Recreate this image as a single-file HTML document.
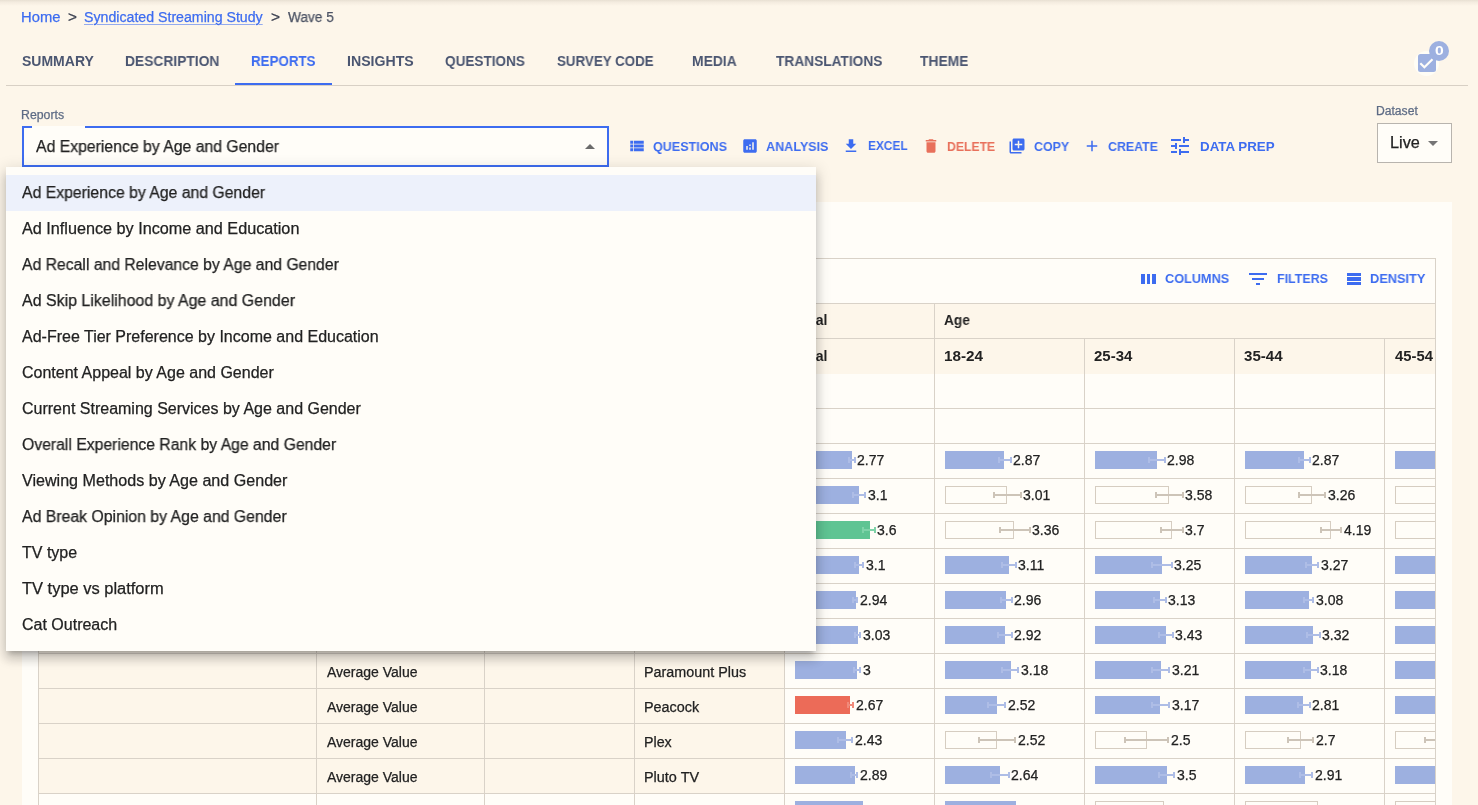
<!DOCTYPE html>
<html><head><meta charset="utf-8"><style>
html,body{margin:0;padding:0}
body{width:1478px;height:805px;overflow:hidden;position:relative;background:#fdf6ea;font-family:"Liberation Sans",sans-serif}
</style></head><body>
<div style="position:absolute;left:0;top:0;width:1478px;height:6px;background:linear-gradient(rgba(60,40,20,.11),rgba(60,40,20,.05) 35%,rgba(60,40,20,0))"></div>
<div style="position:absolute;left:6px;top:85px;width:1462px;height:1px;background:#d8d0c5;"></div>
<div style="position:absolute;left:235px;top:83px;width:97px;height:2px;background:#3d6cf0;"></div>
<div style="position:absolute;left:1414px;top:51px;width:25px;height:25px;border-radius:50%;background:#fffdf6"></div>
<svg style="position:absolute;left:1418px;top:54px" width="18" height="18" viewBox="0 0 18 18"><rect x="0" y="0" width="18" height="18" rx="2.5" fill="#9db0e0"/><path d="M2.3 9.2 L6.4 13.3 L14.5 5.2" stroke="#fffdf8" stroke-width="2.2" fill="none"/></svg>
<div style="position:absolute;left:1429px;top:41px;width:20px;height:20px;border-radius:50%;background:#9db0e0"></div>
<div style="position:absolute;left:22px;top:126px;width:583px;height:37px;border:2px solid #3d6cf0;background:#fffdf8"></div>
<div style="position:absolute;left:32px;top:126px;width:53px;height:2px;background:#fffdf8;"></div>
<svg style="position:absolute;left:585px;top:144px" width="10" height="5" viewBox="0 0 10 5"><path d="M0 5 L5 0 L10 5Z" fill="#6b6b6b"/></svg>
<svg style="position:absolute;left:627.75px;top:137.2px" width="18" height="18" viewBox="0 0 24 24"><path d="M3 14h4v-4H3v4zm0 5h4v-4H3v4zM3 9h4V5H3v4zm5 5h13v-4H8v4zm0 5h13v-4H8v4zM8 5v4h13V5H8z" fill="#3d6cf0"/></svg>
<svg style="position:absolute;left:740.9px;top:136.7px" width="18" height="18" viewBox="0 0 24 24"><path d="M19 3H5c-1.1 0-2 .9-2 2v14c0 1.1.9 2 2 2h14c1.1 0 2-.9 2-2V5c0-1.1-.9-2-2-2zM9 17H7v-5h2v5zm4 0h-2v-3h2v3zm0-5h-2v-2h2v2zm4 5h-2V7h2v10z" fill="#3d6cf0"/></svg>
<svg style="position:absolute;left:842px;top:136.5px" width="18" height="18" viewBox="0 0 24 24"><path d="M19 9h-4V3H9v6H5l7 7 7-7zM5 18v2h14v-2H5z" fill="#3d6cf0"/></svg>
<svg style="position:absolute;left:921.5px;top:137px" width="18" height="18" viewBox="0 0 24 24"><path d="M6 19c0 1.1.9 2 2 2h8c1.1 0 2-.9 2-2V7H6v12zM19 4h-3.5l-1-1h-5l-1 1H5v2h14V4z" fill="#e8705b"/></svg>
<svg style="position:absolute;left:1007.8px;top:136.8px" width="18" height="18" viewBox="0 0 24 24"><path d="M4 6H2v14c0 1.1.9 2 2 2h14v-2H4V6zm16-4H8c-1.1 0-2 .9-2 2v12c0 1.1.9 2 2 2h12c1.1 0 2-.9 2-2V4c0-1.1-.9-2-2-2zm-1 9h-4v4h-2v-4H9V9h4V5h2v4h4v2z" fill="#3d6cf0"/></svg>
<svg style="position:absolute;left:1082.6px;top:136.9px" width="18" height="18" viewBox="0 0 24 24"><path d="M19 13h-6v6h-2v-6H5v-2h6V5h2v6h6v2z" fill="#3d6cf0"/></svg>
<svg style="position:absolute;left:1168.2px;top:134px" width="24" height="24" viewBox="0 0 24 24"><path d="M3 17v2h6v-2H3zM3 5v2h10V5H3zm10 16v-2h8v-2h-8v-2h-2v6h2zM7 9v2H3v2h4v2h2V9H7zm14 4v-2H11v2h10zm-6-4h2V7h4V5h-4V3h-2v6z" fill="#3d6cf0"/></svg>
<div style="position:absolute;left:1377px;top:123px;width:73px;height:38px;border:1px solid #b8b4ae;background:#fffdf8"></div>
<svg style="position:absolute;left:1428px;top:141px" width="10" height="5" viewBox="0 0 10 5"><path d="M0 0 L5 5 L10 0Z" fill="#757575"/></svg>
<div style="position:absolute;left:22px;top:202px;width:1430px;height:620px;background:#fffdf8;"></div>
<div style="position:absolute;left:38px;top:258px;width:1396px;height:600px;border:1px solid #d9d2c8;border-bottom:none"></div>
<div style="position:absolute;left:1141.4px;top:273.7px;width:3.599999999999909px;height:10.300000000000011px;background:#3d6cf0;"></div>
<div style="position:absolute;left:1146.7px;top:273.7px;width:3.7999999999999545px;height:10.300000000000011px;background:#3d6cf0;"></div>
<div style="position:absolute;left:1152.2px;top:273.7px;width:3.7999999999999545px;height:10.300000000000011px;background:#3d6cf0;"></div>
<div style="position:absolute;left:1249px;top:273.1px;width:18px;height:1.8px;background:#3d6cf0;"></div>
<div style="position:absolute;left:1252px;top:278px;width:12px;height:1.8px;background:#3d6cf0;"></div>
<div style="position:absolute;left:1256px;top:283px;width:4px;height:1.8px;background:#3d6cf0;"></div>
<div style="position:absolute;left:1347px;top:273px;width:13.9px;height:2.8px;background:#3d6cf0;"></div>
<div style="position:absolute;left:1347px;top:277.4px;width:13.9px;height:3.2px;background:#3d6cf0;"></div>
<div style="position:absolute;left:1347px;top:282.1px;width:13.9px;height:2.7px;background:#3d6cf0;"></div>
<div style="position:absolute;left:39px;top:303px;width:1396px;height:1px;background:#d9d2c8;"></div>
<div style="position:absolute;left:39px;top:304px;width:1396px;height:70px;background:#fdf6ea;"></div>
<div style="position:absolute;left:39px;top:338px;width:1396px;height:1px;background:#d9d2c8;"></div>
<div style="position:absolute;left:39px;top:373px;width:745px;height:35px;background:#fdf6ea;"></div>
<div style="position:absolute;left:39px;top:408px;width:745px;height:35px;background:#fdf6ea;"></div>
<div style="position:absolute;left:39px;top:443px;width:745px;height:35px;background:#fdf6ea;"></div>
<div style="position:absolute;left:39px;top:478px;width:745px;height:35px;background:#fdf6ea;"></div>
<div style="position:absolute;left:39px;top:513px;width:745px;height:35px;background:#fdf6ea;"></div>
<div style="position:absolute;left:39px;top:548px;width:745px;height:35px;background:#fdf6ea;"></div>
<div style="position:absolute;left:39px;top:583px;width:745px;height:35px;background:#fdf6ea;"></div>
<div style="position:absolute;left:39px;top:618px;width:745px;height:35px;background:#fdf6ea;"></div>
<div style="position:absolute;left:39px;top:653px;width:745px;height:35px;background:#fdf6ea;"></div>
<div style="position:absolute;left:39px;top:688px;width:745px;height:35px;background:#fdf6ea;"></div>
<div style="position:absolute;left:39px;top:723px;width:745px;height:35px;background:#fdf6ea;"></div>
<div style="position:absolute;left:39px;top:758px;width:745px;height:35px;background:#fdf6ea;"></div>
<div style="position:absolute;left:39px;top:408px;width:1396px;height:1px;background:#d9d2c8;"></div>
<div style="position:absolute;left:39px;top:443px;width:1396px;height:1px;background:#d9d2c8;"></div>
<div style="position:absolute;left:39px;top:478px;width:1396px;height:1px;background:#d9d2c8;"></div>
<div style="position:absolute;left:39px;top:513px;width:1396px;height:1px;background:#d9d2c8;"></div>
<div style="position:absolute;left:39px;top:548px;width:1396px;height:1px;background:#d9d2c8;"></div>
<div style="position:absolute;left:39px;top:583px;width:1396px;height:1px;background:#d9d2c8;"></div>
<div style="position:absolute;left:39px;top:618px;width:1396px;height:1px;background:#d9d2c8;"></div>
<div style="position:absolute;left:39px;top:653px;width:1396px;height:1px;background:#d9d2c8;"></div>
<div style="position:absolute;left:39px;top:688px;width:1396px;height:1px;background:#d9d2c8;"></div>
<div style="position:absolute;left:39px;top:723px;width:1396px;height:1px;background:#d9d2c8;"></div>
<div style="position:absolute;left:39px;top:758px;width:1396px;height:1px;background:#d9d2c8;"></div>
<div style="position:absolute;left:39px;top:793px;width:1396px;height:1px;background:#d9d2c8;"></div>
<div style="position:absolute;left:316px;top:303px;width:1px;height:600px;background:#d9d2c8;"></div>
<div style="position:absolute;left:484px;top:303px;width:1px;height:600px;background:#d9d2c8;"></div>
<div style="position:absolute;left:634px;top:303px;width:1px;height:600px;background:#d9d2c8;"></div>
<div style="position:absolute;left:784px;top:303px;width:1px;height:600px;background:#d9d2c8;"></div>
<div style="position:absolute;left:934px;top:303px;width:1px;height:600px;background:#d9d2c8;"></div>
<div style="position:absolute;left:1084px;top:338px;width:1px;height:600px;background:#d9d2c8;"></div>
<div style="position:absolute;left:1234px;top:338px;width:1px;height:600px;background:#d9d2c8;"></div>
<div style="position:absolute;left:1384px;top:338px;width:1px;height:600px;background:#d9d2c8;"></div>
<div style="position:absolute;left:21.36px;top:10px;font-size:14px;line-height:14px;font-weight:400;color:#3d6cf0;white-space:nowrap;will-change:transform;-webkit-text-stroke:0.25px #3d6cf0;transform:scaleX(1.0553);transform-origin:0 0;">Home</div>
<div style="position:absolute;left:67.93px;top:10px;font-size:14px;line-height:14px;font-weight:400;color:#3c4150;white-space:nowrap;will-change:transform;-webkit-text-stroke:0.25px #3c4150;transform:scaleX(1.0867);transform-origin:0 0;">&gt;</div>
<div style="position:absolute;left:84.12px;top:10px;font-size:14px;line-height:14px;font-weight:400;color:#3d6cf0;white-space:nowrap;will-change:transform;-webkit-text-stroke:0.25px #3d6cf0;transform:scaleX(1.0116);transform-origin:0 0;text-decoration:underline;text-decoration-color:rgba(61,108,240,.55);text-underline-offset:1.5px;text-decoration-thickness:1px">Syndicated Streaming Study</div>
<div style="position:absolute;left:270.82px;top:10px;font-size:14px;line-height:14px;font-weight:400;color:#3c4150;white-space:nowrap;will-change:transform;-webkit-text-stroke:0.25px #3c4150;transform:scaleX(1.1016);transform-origin:0 0;">&gt;</div>
<div style="position:absolute;left:287.78px;top:10px;font-size:14px;line-height:14px;font-weight:400;color:#4b5263;white-space:nowrap;will-change:transform;-webkit-text-stroke:0.25px #4b5263;transform:scaleX(0.9744);transform-origin:0 0;">Wave 5</div>
<div style="position:absolute;left:21.55px;top:54px;font-size:14px;line-height:14px;font-weight:700;color:#4b5671;white-space:nowrap;will-change:transform;">SUMMARY</div>
<div style="position:absolute;left:125.08px;top:54px;font-size:14px;line-height:14px;font-weight:700;color:#4b5671;white-space:nowrap;will-change:transform;transform:scaleX(0.9859);transform-origin:0 0;">DESCRIPTION</div>
<div style="position:absolute;left:250.71px;top:54px;font-size:14px;line-height:14px;font-weight:700;color:#3d6cf0;white-space:nowrap;will-change:transform;transform:scaleX(0.9535);transform-origin:0 0;">REPORTS</div>
<div style="position:absolute;left:346.85px;top:54px;font-size:14px;line-height:14px;font-weight:700;color:#4b5671;white-space:nowrap;will-change:transform;transform:scaleX(1.0090);transform-origin:0 0;">INSIGHTS</div>
<div style="position:absolute;left:445.37px;top:54px;font-size:14px;line-height:14px;font-weight:700;color:#4b5671;white-space:nowrap;will-change:transform;transform:scaleX(0.9698);transform-origin:0 0;">QUESTIONS</div>
<div style="position:absolute;left:557.18px;top:54px;font-size:14px;line-height:14px;font-weight:700;color:#4b5671;white-space:nowrap;will-change:transform;transform:scaleX(0.9528);transform-origin:0 0;">SURVEY CODE</div>
<div style="position:absolute;left:691.67px;top:54px;font-size:14px;line-height:14px;font-weight:700;color:#4b5671;white-space:nowrap;will-change:transform;transform:scaleX(0.9906);transform-origin:0 0;">MEDIA</div>
<div style="position:absolute;left:776.23px;top:54px;font-size:14px;line-height:14px;font-weight:700;color:#4b5671;white-space:nowrap;will-change:transform;transform:scaleX(0.9793);transform-origin:0 0;">TRANSLATIONS</div>
<div style="position:absolute;left:919.93px;top:54px;font-size:14px;line-height:14px;font-weight:700;color:#4b5671;white-space:nowrap;will-change:transform;transform:scaleX(0.9863);transform-origin:0 0;">THEME</div>
<div style="position:absolute;left:1434.65px;top:45px;font-size:12px;line-height:12px;font-weight:700;color:#ffffff;white-space:nowrap;will-change:transform;transform:scaleX(1.3068);transform-origin:0 0;">0</div>
<div style="position:absolute;left:20.69px;top:109px;font-size:12px;line-height:12px;font-weight:400;color:#5d6b85;white-space:nowrap;will-change:transform;-webkit-text-stroke:0.25px #5d6b85;transform:scaleX(1.0249);transform-origin:0 0;">Reports</div>
<div style="position:absolute;left:36.26px;top:139px;font-size:16px;line-height:16px;font-weight:400;color:#222222;white-space:nowrap;will-change:transform;-webkit-text-stroke:0.25px #222222;transform:scaleX(0.9861);transform-origin:0 0;">Ad Experience by Age and Gender</div>
<div style="position:absolute;left:653.23px;top:140px;font-size:13px;line-height:13px;font-weight:700;color:#3d6cf0;white-space:nowrap;will-change:transform;transform:scaleX(0.9656);transform-origin:0 0;">QUESTIONS</div>
<div style="position:absolute;left:766.49px;top:140px;font-size:13px;line-height:13px;font-weight:700;color:#3d6cf0;white-space:nowrap;will-change:transform;transform:scaleX(0.9685);transform-origin:0 0;">ANALYSIS</div>
<div style="position:absolute;left:868.10px;top:139px;font-size:13px;line-height:13px;font-weight:700;color:#3d6cf0;white-space:nowrap;will-change:transform;transform:scaleX(0.9129);transform-origin:0 0;">EXCEL</div>
<div style="position:absolute;left:947.18px;top:140px;font-size:13px;line-height:13px;font-weight:700;color:#e8705b;white-space:nowrap;will-change:transform;transform:scaleX(0.9384);transform-origin:0 0;">DELETE</div>
<div style="position:absolute;left:1034.25px;top:140px;font-size:13px;line-height:13px;font-weight:700;color:#3d6cf0;white-space:nowrap;will-change:transform;transform:scaleX(0.9518);transform-origin:0 0;">COPY</div>
<div style="position:absolute;left:1108.45px;top:140px;font-size:13px;line-height:13px;font-weight:700;color:#3d6cf0;white-space:nowrap;will-change:transform;transform:scaleX(0.9511);transform-origin:0 0;">CREATE</div>
<div style="position:absolute;left:1199.80px;top:140px;font-size:13px;line-height:13px;font-weight:700;color:#3d6cf0;white-space:nowrap;will-change:transform;transform:scaleX(1.0266);transform-origin:0 0;">DATA PREP</div>
<div style="position:absolute;left:1376.41px;top:105px;font-size:12px;line-height:12px;font-weight:400;color:#5d6b85;white-space:nowrap;will-change:transform;-webkit-text-stroke:0.25px #5d6b85;transform:scaleX(1.0098);transform-origin:0 0;">Dataset</div>
<div style="position:absolute;left:1390.25px;top:135px;font-size:16px;line-height:16px;font-weight:400;color:#222222;white-space:nowrap;will-change:transform;-webkit-text-stroke:0.25px #222222;transform:scaleX(1.0152);transform-origin:0 0;">Live</div>
<div style="position:absolute;left:1165.43px;top:272px;font-size:13px;line-height:13px;font-weight:700;color:#3d6cf0;white-space:nowrap;will-change:transform;transform:scaleX(0.9767);transform-origin:0 0;">COLUMNS</div>
<div style="position:absolute;left:1277.16px;top:272px;font-size:13px;line-height:13px;font-weight:700;color:#3d6cf0;white-space:nowrap;will-change:transform;transform:scaleX(0.9575);transform-origin:0 0;">FILTERS</div>
<div style="position:absolute;left:1369.74px;top:272px;font-size:13px;line-height:13px;font-weight:700;color:#3d6cf0;white-space:nowrap;will-change:transform;transform:scaleX(0.9826);transform-origin:0 0;">DENSITY</div>
<div style="position:absolute;left:794.82px;top:313px;font-size:14px;line-height:14px;font-weight:700;color:#222222;white-space:nowrap;will-change:transform;">Total</div>
<div style="position:absolute;left:794.82px;top:349px;font-size:14px;line-height:14px;font-weight:700;color:#222222;white-space:nowrap;will-change:transform;">Total</div>
<div style="position:absolute;left:944.48px;top:313px;font-size:14px;line-height:14px;font-weight:700;color:#222222;white-space:nowrap;will-change:transform;transform:scaleX(0.9771);transform-origin:0 0;">Age</div>
<div style="position:absolute;left:944.05px;top:349px;font-size:14px;line-height:14px;font-weight:700;color:#222222;white-space:nowrap;will-change:transform;transform:scaleX(1.0911);transform-origin:0 0;">18-24</div>
<div style="position:absolute;left:1094.47px;top:349px;font-size:14px;line-height:14px;font-weight:700;color:#222222;white-space:nowrap;will-change:transform;transform:scaleX(1.0708);transform-origin:0 0;">25-34</div>
<div style="position:absolute;left:1244.40px;top:349px;font-size:14px;line-height:14px;font-weight:700;color:#222222;white-space:nowrap;will-change:transform;transform:scaleX(1.0785);transform-origin:0 0;">35-44</div>
<div style="position:absolute;left:1394.75px;top:349px;font-size:14px;line-height:14px;font-weight:700;color:#222222;white-space:nowrap;will-change:transform;transform:scaleX(1.0574);transform-origin:0 0;">45-54</div>
<div style="position:absolute;left:327.15px;top:665px;font-size:14px;line-height:14px;font-weight:400;color:#222222;white-space:nowrap;will-change:transform;-webkit-text-stroke:0.25px #222222;">Average Value</div>
<div style="position:absolute;left:644.19px;top:665px;font-size:14px;line-height:14px;font-weight:400;color:#222222;white-space:nowrap;will-change:transform;-webkit-text-stroke:0.25px #222222;transform:scaleX(1.0249);transform-origin:0 0;">Paramount Plus</div>
<div style="position:absolute;left:327.15px;top:700px;font-size:14px;line-height:14px;font-weight:400;color:#222222;white-space:nowrap;will-change:transform;-webkit-text-stroke:0.25px #222222;">Average Value</div>
<div style="position:absolute;left:644.19px;top:700px;font-size:14px;line-height:14px;font-weight:400;color:#222222;white-space:nowrap;will-change:transform;-webkit-text-stroke:0.25px #222222;transform:scaleX(1.0281);transform-origin:0 0;">Peacock</div>
<div style="position:absolute;left:327.15px;top:735px;font-size:14px;line-height:14px;font-weight:400;color:#222222;white-space:nowrap;will-change:transform;-webkit-text-stroke:0.25px #222222;">Average Value</div>
<div style="position:absolute;left:644.20px;top:735px;font-size:14px;line-height:14px;font-weight:400;color:#222222;white-space:nowrap;will-change:transform;-webkit-text-stroke:0.25px #222222;transform:scaleX(1.0183);transform-origin:0 0;">Plex</div>
<div style="position:absolute;left:327.15px;top:770px;font-size:14px;line-height:14px;font-weight:400;color:#222222;white-space:nowrap;will-change:transform;-webkit-text-stroke:0.25px #222222;">Average Value</div>
<div style="position:absolute;left:644.19px;top:770px;font-size:14px;line-height:14px;font-weight:400;color:#222222;white-space:nowrap;will-change:transform;-webkit-text-stroke:0.25px #222222;transform:scaleX(1.0304);transform-origin:0 0;">Pluto TV</div>
<div style="position:absolute;left:0;top:0;width:1435px;height:805px;overflow:hidden"><div style="position:absolute;left:795px;top:451px;width:57px;height:18px;background:#9db0e0;"></div>
<div style="position:absolute;left:848.3px;top:459px;width:7.2000000000000455px;height:1.7px;background:#aebde6;"></div>
<div style="position:absolute;left:848.3px;top:457px;width:2px;height:6px;background:#aebde6;"></div>
<div style="position:absolute;left:853.5px;top:457px;width:2px;height:6px;background:#aebde6;"></div>
<div style="position:absolute;left:795px;top:486px;width:64px;height:18px;background:#9db0e0;"></div>
<div style="position:absolute;left:852.4px;top:494px;width:13.399999999999977px;height:1.7px;background:#aebde6;"></div>
<div style="position:absolute;left:852.4px;top:492px;width:2px;height:6px;background:#aebde6;"></div>
<div style="position:absolute;left:863.8px;top:492px;width:2px;height:6px;background:#aebde6;"></div>
<div style="position:absolute;left:795px;top:521px;width:74.79999999999995px;height:18px;background:#5fc493;"></div>
<div style="position:absolute;left:862px;top:529px;width:13.600000000000023px;height:1.7px;background:#7fd3a9;"></div>
<div style="position:absolute;left:862px;top:527px;width:2px;height:6px;background:#7fd3a9;"></div>
<div style="position:absolute;left:873.6px;top:527px;width:2px;height:6px;background:#7fd3a9;"></div>
<div style="position:absolute;left:795px;top:556px;width:63.89999999999998px;height:18px;background:#9db0e0;"></div>
<div style="position:absolute;left:854px;top:564px;width:10px;height:1.7px;background:#aebde6;"></div>
<div style="position:absolute;left:854px;top:562px;width:2px;height:6px;background:#aebde6;"></div>
<div style="position:absolute;left:862px;top:562px;width:2px;height:6px;background:#aebde6;"></div>
<div style="position:absolute;left:795px;top:591px;width:60.60000000000002px;height:18px;background:#9db0e0;"></div>
<div style="position:absolute;left:851.8px;top:599px;width:6.2000000000000455px;height:1.7px;background:#aebde6;"></div>
<div style="position:absolute;left:851.8px;top:597px;width:2px;height:6px;background:#aebde6;"></div>
<div style="position:absolute;left:856px;top:597px;width:2px;height:6px;background:#aebde6;"></div>
<div style="position:absolute;left:795px;top:626px;width:62.799999999999955px;height:18px;background:#9db0e0;"></div>
<div style="position:absolute;left:854.1px;top:634px;width:7.199999999999932px;height:1.7px;background:#aebde6;"></div>
<div style="position:absolute;left:854.1px;top:632px;width:2px;height:6px;background:#aebde6;"></div>
<div style="position:absolute;left:859.3px;top:632px;width:2px;height:6px;background:#aebde6;"></div>
<div style="position:absolute;left:795px;top:661px;width:61.89999999999998px;height:18px;background:#9db0e0;"></div>
<div style="position:absolute;left:852.5px;top:669px;width:8.799999999999955px;height:1.7px;background:#aebde6;"></div>
<div style="position:absolute;left:852.5px;top:667px;width:2px;height:6px;background:#aebde6;"></div>
<div style="position:absolute;left:859.3px;top:667px;width:2px;height:6px;background:#aebde6;"></div>
<div style="position:absolute;left:795px;top:696px;width:54.89999999999998px;height:18px;background:#ec6b58;"></div>
<div style="position:absolute;left:846.7px;top:704px;width:7.699999999999932px;height:1.7px;background:#f08a7a;"></div>
<div style="position:absolute;left:846.7px;top:702px;width:2px;height:6px;background:#f08a7a;"></div>
<div style="position:absolute;left:852.4px;top:702px;width:2px;height:6px;background:#f08a7a;"></div>
<div style="position:absolute;left:795px;top:731px;width:51px;height:18px;background:#9db0e0;"></div>
<div style="position:absolute;left:836.9px;top:739px;width:16.300000000000068px;height:1.7px;background:#aebde6;"></div>
<div style="position:absolute;left:836.9px;top:737px;width:2px;height:6px;background:#aebde6;"></div>
<div style="position:absolute;left:851.2px;top:737px;width:2px;height:6px;background:#aebde6;"></div>
<div style="position:absolute;left:795px;top:766px;width:59.799999999999955px;height:18px;background:#9db0e0;"></div>
<div style="position:absolute;left:850.2px;top:774px;width:8.099999999999909px;height:1.7px;background:#aebde6;"></div>
<div style="position:absolute;left:850.2px;top:772px;width:2px;height:6px;background:#aebde6;"></div>
<div style="position:absolute;left:856.3px;top:772px;width:2px;height:6px;background:#aebde6;"></div>
<div style="position:absolute;left:795px;top:801px;width:67.89999999999998px;height:18px;background:#9db0e0;"></div>
<div style="position:absolute;left:945px;top:451px;width:59px;height:18px;background:#9db0e0;"></div>
<div style="position:absolute;left:997.5px;top:459px;width:14.100000000000023px;height:1.7px;background:#aebde6;"></div>
<div style="position:absolute;left:997.5px;top:457px;width:2px;height:6px;background:#aebde6;"></div>
<div style="position:absolute;left:1009.6px;top:457px;width:2px;height:6px;background:#aebde6;"></div>
<div style="position:absolute;left:945px;top:486px;width:61.60000000000002px;height:18px;background:transparent;box-sizing:border-box;border:1px solid #d6cdc1"></div>
<div style="position:absolute;left:992.7px;top:494px;width:28.899999999999977px;height:1.7px;background:#cdc4b8;"></div>
<div style="position:absolute;left:992.7px;top:492px;width:2px;height:6px;background:#cdc4b8;"></div>
<div style="position:absolute;left:1019.6px;top:492px;width:2px;height:6px;background:#cdc4b8;"></div>
<div style="position:absolute;left:945px;top:521px;width:68.60000000000002px;height:18px;background:transparent;box-sizing:border-box;border:1px solid #d6cdc1"></div>
<div style="position:absolute;left:998.8px;top:529px;width:31.90000000000009px;height:1.7px;background:#cdc4b8;"></div>
<div style="position:absolute;left:998.8px;top:527px;width:2px;height:6px;background:#cdc4b8;"></div>
<div style="position:absolute;left:1028.7px;top:527px;width:2px;height:6px;background:#cdc4b8;"></div>
<div style="position:absolute;left:945px;top:556px;width:64px;height:18px;background:#9db0e0;"></div>
<div style="position:absolute;left:1001.4px;top:564px;width:15.200000000000045px;height:1.7px;background:#aebde6;"></div>
<div style="position:absolute;left:1001.4px;top:562px;width:2px;height:6px;background:#aebde6;"></div>
<div style="position:absolute;left:1014.6px;top:562px;width:2px;height:6px;background:#aebde6;"></div>
<div style="position:absolute;left:945px;top:591px;width:61px;height:18px;background:#9db0e0;"></div>
<div style="position:absolute;left:1000.3px;top:599px;width:12.400000000000091px;height:1.7px;background:#aebde6;"></div>
<div style="position:absolute;left:1000.3px;top:597px;width:2px;height:6px;background:#aebde6;"></div>
<div style="position:absolute;left:1010.7px;top:597px;width:2px;height:6px;background:#aebde6;"></div>
<div style="position:absolute;left:945px;top:626px;width:59.799999999999955px;height:18px;background:#9db0e0;"></div>
<div style="position:absolute;left:997.2px;top:634px;width:15.299999999999955px;height:1.7px;background:#aebde6;"></div>
<div style="position:absolute;left:997.2px;top:632px;width:2px;height:6px;background:#aebde6;"></div>
<div style="position:absolute;left:1010.5px;top:632px;width:2px;height:6px;background:#aebde6;"></div>
<div style="position:absolute;left:945px;top:661px;width:65.89999999999998px;height:18px;background:#9db0e0;"></div>
<div style="position:absolute;left:1001.3px;top:669px;width:18.100000000000023px;height:1.7px;background:#aebde6;"></div>
<div style="position:absolute;left:1001.3px;top:667px;width:2px;height:6px;background:#aebde6;"></div>
<div style="position:absolute;left:1017.4px;top:667px;width:2px;height:6px;background:#aebde6;"></div>
<div style="position:absolute;left:945px;top:696px;width:51.89999999999998px;height:18px;background:#9db0e0;"></div>
<div style="position:absolute;left:987px;top:704px;width:19.399999999999977px;height:1.7px;background:#aebde6;"></div>
<div style="position:absolute;left:987px;top:702px;width:2px;height:6px;background:#aebde6;"></div>
<div style="position:absolute;left:1004.4px;top:702px;width:2px;height:6px;background:#aebde6;"></div>
<div style="position:absolute;left:945px;top:731px;width:51.700000000000045px;height:18px;background:transparent;box-sizing:border-box;border:1px solid #d6cdc1"></div>
<div style="position:absolute;left:977.6px;top:739px;width:38.799999999999955px;height:1.7px;background:#cdc4b8;"></div>
<div style="position:absolute;left:977.6px;top:737px;width:2px;height:6px;background:#cdc4b8;"></div>
<div style="position:absolute;left:1014.4px;top:737px;width:2px;height:6px;background:#cdc4b8;"></div>
<div style="position:absolute;left:945px;top:766px;width:54.89999999999998px;height:18px;background:#9db0e0;"></div>
<div style="position:absolute;left:989.7px;top:774px;width:19.799999999999955px;height:1.7px;background:#aebde6;"></div>
<div style="position:absolute;left:989.7px;top:772px;width:2px;height:6px;background:#aebde6;"></div>
<div style="position:absolute;left:1007.5px;top:772px;width:2px;height:6px;background:#aebde6;"></div>
<div style="position:absolute;left:945px;top:801px;width:70.70000000000005px;height:18px;background:#9db0e0;"></div>
<div style="position:absolute;left:1095px;top:451px;width:61.799999999999955px;height:18px;background:#9db0e0;"></div>
<div style="position:absolute;left:1147.5px;top:459px;width:18.0px;height:1.7px;background:#aebde6;"></div>
<div style="position:absolute;left:1147.5px;top:457px;width:2px;height:6px;background:#aebde6;"></div>
<div style="position:absolute;left:1163.5px;top:457px;width:2px;height:6px;background:#aebde6;"></div>
<div style="position:absolute;left:1095px;top:486px;width:74.40000000000009px;height:18px;background:transparent;box-sizing:border-box;border:1px solid #d6cdc1"></div>
<div style="position:absolute;left:1154.7px;top:494px;width:28.899999999999864px;height:1.7px;background:#cdc4b8;"></div>
<div style="position:absolute;left:1154.7px;top:492px;width:2px;height:6px;background:#cdc4b8;"></div>
<div style="position:absolute;left:1181.6px;top:492px;width:2px;height:6px;background:#cdc4b8;"></div>
<div style="position:absolute;left:1095px;top:521px;width:76.59999999999991px;height:18px;background:transparent;box-sizing:border-box;border:1px solid #d6cdc1"></div>
<div style="position:absolute;left:1159.7px;top:529px;width:23.899999999999864px;height:1.7px;background:#cdc4b8;"></div>
<div style="position:absolute;left:1159.7px;top:527px;width:2px;height:6px;background:#cdc4b8;"></div>
<div style="position:absolute;left:1181.6px;top:527px;width:2px;height:6px;background:#cdc4b8;"></div>
<div style="position:absolute;left:1095px;top:556px;width:66.79999999999995px;height:18px;background:#9db0e0;"></div>
<div style="position:absolute;left:1151.4px;top:564px;width:21.09999999999991px;height:1.7px;background:#aebde6;"></div>
<div style="position:absolute;left:1151.4px;top:562px;width:2px;height:6px;background:#aebde6;"></div>
<div style="position:absolute;left:1170.5px;top:562px;width:2px;height:6px;background:#aebde6;"></div>
<div style="position:absolute;left:1095px;top:591px;width:64.70000000000005px;height:18px;background:#9db0e0;"></div>
<div style="position:absolute;left:1152.5px;top:599px;width:14.099999999999909px;height:1.7px;background:#aebde6;"></div>
<div style="position:absolute;left:1152.5px;top:597px;width:2px;height:6px;background:#aebde6;"></div>
<div style="position:absolute;left:1164.6px;top:597px;width:2px;height:6px;background:#aebde6;"></div>
<div style="position:absolute;left:1095px;top:626px;width:70.70000000000005px;height:18px;background:#9db0e0;"></div>
<div style="position:absolute;left:1158.3px;top:634px;width:15.299999999999955px;height:1.7px;background:#aebde6;"></div>
<div style="position:absolute;left:1158.3px;top:632px;width:2px;height:6px;background:#aebde6;"></div>
<div style="position:absolute;left:1171.6px;top:632px;width:2px;height:6px;background:#aebde6;"></div>
<div style="position:absolute;left:1095px;top:661px;width:65.90000000000009px;height:18px;background:#9db0e0;"></div>
<div style="position:absolute;left:1151.3px;top:669px;width:19.100000000000136px;height:1.7px;background:#aebde6;"></div>
<div style="position:absolute;left:1151.3px;top:667px;width:2px;height:6px;background:#aebde6;"></div>
<div style="position:absolute;left:1168.4px;top:667px;width:2px;height:6px;background:#aebde6;"></div>
<div style="position:absolute;left:1095px;top:696px;width:64.90000000000009px;height:18px;background:#9db0e0;"></div>
<div style="position:absolute;left:1150.6px;top:704px;width:19.800000000000182px;height:1.7px;background:#aebde6;"></div>
<div style="position:absolute;left:1150.6px;top:702px;width:2px;height:6px;background:#aebde6;"></div>
<div style="position:absolute;left:1168.4px;top:702px;width:2px;height:6px;background:#aebde6;"></div>
<div style="position:absolute;left:1095px;top:731px;width:51.700000000000045px;height:18px;background:transparent;box-sizing:border-box;border:1px solid #d6cdc1"></div>
<div style="position:absolute;left:1123.9px;top:739px;width:45.5px;height:1.7px;background:#cdc4b8;"></div>
<div style="position:absolute;left:1123.9px;top:737px;width:2px;height:6px;background:#cdc4b8;"></div>
<div style="position:absolute;left:1167.4px;top:737px;width:2px;height:6px;background:#cdc4b8;"></div>
<div style="position:absolute;left:1095px;top:766px;width:71.90000000000009px;height:18px;background:#9db0e0;"></div>
<div style="position:absolute;left:1158.3px;top:774px;width:16.90000000000009px;height:1.7px;background:#aebde6;"></div>
<div style="position:absolute;left:1158.3px;top:772px;width:2px;height:6px;background:#aebde6;"></div>
<div style="position:absolute;left:1173.2px;top:772px;width:2px;height:6px;background:#aebde6;"></div>
<div style="position:absolute;left:1095px;top:801px;width:68.59999999999991px;height:18px;background:transparent;box-sizing:border-box;border:1px solid #d6cdc1"></div>
<div style="position:absolute;left:1245px;top:451px;width:59px;height:18px;background:#9db0e0;"></div>
<div style="position:absolute;left:1298.1px;top:459px;width:12.400000000000091px;height:1.7px;background:#aebde6;"></div>
<div style="position:absolute;left:1298.1px;top:457px;width:2px;height:6px;background:#aebde6;"></div>
<div style="position:absolute;left:1308.5px;top:457px;width:2px;height:6px;background:#aebde6;"></div>
<div style="position:absolute;left:1245px;top:486px;width:66.59999999999991px;height:18px;background:transparent;box-sizing:border-box;border:1px solid #d6cdc1"></div>
<div style="position:absolute;left:1297.5px;top:494px;width:28.90000000000009px;height:1.7px;background:#cdc4b8;"></div>
<div style="position:absolute;left:1297.5px;top:492px;width:2px;height:6px;background:#cdc4b8;"></div>
<div style="position:absolute;left:1324.4px;top:492px;width:2px;height:6px;background:#cdc4b8;"></div>
<div style="position:absolute;left:1245px;top:521px;width:86.40000000000009px;height:18px;background:transparent;box-sizing:border-box;border:1px solid #d6cdc1"></div>
<div style="position:absolute;left:1319.9px;top:529px;width:22.399999999999864px;height:1.7px;background:#cdc4b8;"></div>
<div style="position:absolute;left:1319.9px;top:527px;width:2px;height:6px;background:#cdc4b8;"></div>
<div style="position:absolute;left:1340.3px;top:527px;width:2px;height:6px;background:#cdc4b8;"></div>
<div style="position:absolute;left:1245px;top:556px;width:66.79999999999995px;height:18px;background:#9db0e0;"></div>
<div style="position:absolute;left:1304.7px;top:564px;width:14.700000000000045px;height:1.7px;background:#aebde6;"></div>
<div style="position:absolute;left:1304.7px;top:562px;width:2px;height:6px;background:#aebde6;"></div>
<div style="position:absolute;left:1317.4px;top:562px;width:2px;height:6px;background:#aebde6;"></div>
<div style="position:absolute;left:1245px;top:591px;width:64px;height:18px;background:#9db0e0;"></div>
<div style="position:absolute;left:1302.5px;top:599px;width:11.900000000000091px;height:1.7px;background:#aebde6;"></div>
<div style="position:absolute;left:1302.5px;top:597px;width:2px;height:6px;background:#aebde6;"></div>
<div style="position:absolute;left:1312.4px;top:597px;width:2px;height:6px;background:#aebde6;"></div>
<div style="position:absolute;left:1245px;top:626px;width:67.90000000000009px;height:18px;background:#9db0e0;"></div>
<div style="position:absolute;left:1306.4px;top:634px;width:14.199999999999818px;height:1.7px;background:#aebde6;"></div>
<div style="position:absolute;left:1306.4px;top:632px;width:2px;height:6px;background:#aebde6;"></div>
<div style="position:absolute;left:1318.6px;top:632px;width:2px;height:6px;background:#aebde6;"></div>
<div style="position:absolute;left:1245px;top:661px;width:65.90000000000009px;height:18px;background:#9db0e0;"></div>
<div style="position:absolute;left:1302.5px;top:669px;width:16.200000000000045px;height:1.7px;background:#aebde6;"></div>
<div style="position:absolute;left:1302.5px;top:667px;width:2px;height:6px;background:#aebde6;"></div>
<div style="position:absolute;left:1316.7px;top:667px;width:2px;height:6px;background:#aebde6;"></div>
<div style="position:absolute;left:1245px;top:696px;width:58px;height:18px;background:#9db0e0;"></div>
<div style="position:absolute;left:1296.7px;top:704px;width:13.899999999999864px;height:1.7px;background:#aebde6;"></div>
<div style="position:absolute;left:1296.7px;top:702px;width:2px;height:6px;background:#aebde6;"></div>
<div style="position:absolute;left:1308.6px;top:702px;width:2px;height:6px;background:#aebde6;"></div>
<div style="position:absolute;left:1245px;top:731px;width:55.90000000000009px;height:18px;background:transparent;box-sizing:border-box;border:1px solid #d6cdc1"></div>
<div style="position:absolute;left:1286.9px;top:739px;width:27.199999999999818px;height:1.7px;background:#cdc4b8;"></div>
<div style="position:absolute;left:1286.9px;top:737px;width:2px;height:6px;background:#cdc4b8;"></div>
<div style="position:absolute;left:1312.1px;top:737px;width:2px;height:6px;background:#cdc4b8;"></div>
<div style="position:absolute;left:1245px;top:766px;width:59.799999999999955px;height:18px;background:#9db0e0;"></div>
<div style="position:absolute;left:1298.5px;top:774px;width:14.400000000000091px;height:1.7px;background:#aebde6;"></div>
<div style="position:absolute;left:1298.5px;top:772px;width:2px;height:6px;background:#aebde6;"></div>
<div style="position:absolute;left:1310.9px;top:772px;width:2px;height:6px;background:#aebde6;"></div>
<div style="position:absolute;left:1245px;top:801px;width:72.59999999999991px;height:18px;background:transparent;box-sizing:border-box;border:1px solid #d6cdc1"></div>
<div style="position:absolute;left:1395px;top:451px;width:65px;height:18px;background:#9db0e0;"></div>
<div style="position:absolute;left:1395px;top:486px;width:65px;height:18px;background:transparent;box-sizing:border-box;border:1px solid #d6cdc1"></div>
<div style="position:absolute;left:1395px;top:521px;width:65px;height:18px;background:transparent;box-sizing:border-box;border:1px solid #d6cdc1"></div>
<div style="position:absolute;left:1395px;top:556px;width:65px;height:18px;background:#9db0e0;"></div>
<div style="position:absolute;left:1395px;top:591px;width:65px;height:18px;background:#9db0e0;"></div>
<div style="position:absolute;left:1395px;top:626px;width:65px;height:18px;background:#9db0e0;"></div>
<div style="position:absolute;left:1395px;top:661px;width:65px;height:18px;background:#9db0e0;"></div>
<div style="position:absolute;left:1395px;top:696px;width:65px;height:18px;background:#9db0e0;"></div>
<div style="position:absolute;left:1395px;top:731px;width:65px;height:18px;background:transparent;box-sizing:border-box;border:1px solid #d6cdc1"></div>
<div style="position:absolute;left:1423.5px;top:739px;width:46.5px;height:1.7px;background:#cdc4b8;"></div>
<div style="position:absolute;left:1423.5px;top:737px;width:2px;height:6px;background:#cdc4b8;"></div>
<div style="position:absolute;left:1468px;top:737px;width:2px;height:6px;background:#cdc4b8;"></div>
<div style="position:absolute;left:1395px;top:766px;width:65px;height:18px;background:#9db0e0;"></div>
<div style="position:absolute;left:1395px;top:801px;width:65px;height:18px;background:transparent;box-sizing:border-box;border:1px solid #d6cdc1"></div>
<div style="position:absolute;left:857.29px;top:453px;font-size:14px;line-height:14px;font-weight:400;color:#222222;white-space:nowrap;will-change:transform;-webkit-text-stroke:0.25px #222222;">2.77</div>
<div style="position:absolute;left:867.59px;top:488px;font-size:14px;line-height:14px;font-weight:400;color:#222222;white-space:nowrap;will-change:transform;-webkit-text-stroke:0.25px #222222;">3.1</div>
<div style="position:absolute;left:877.39px;top:523px;font-size:14px;line-height:14px;font-weight:400;color:#222222;white-space:nowrap;will-change:transform;-webkit-text-stroke:0.25px #222222;">3.6</div>
<div style="position:absolute;left:865.79px;top:558px;font-size:14px;line-height:14px;font-weight:400;color:#222222;white-space:nowrap;will-change:transform;-webkit-text-stroke:0.25px #222222;">3.1</div>
<div style="position:absolute;left:859.79px;top:593px;font-size:14px;line-height:14px;font-weight:400;color:#222222;white-space:nowrap;will-change:transform;-webkit-text-stroke:0.25px #222222;">2.94</div>
<div style="position:absolute;left:863.09px;top:628px;font-size:14px;line-height:14px;font-weight:400;color:#222222;white-space:nowrap;will-change:transform;-webkit-text-stroke:0.25px #222222;">3.03</div>
<div style="position:absolute;left:863.09px;top:663px;font-size:14px;line-height:14px;font-weight:400;color:#222222;white-space:nowrap;will-change:transform;-webkit-text-stroke:0.25px #222222;">3</div>
<div style="position:absolute;left:856.19px;top:698px;font-size:14px;line-height:14px;font-weight:400;color:#222222;white-space:nowrap;will-change:transform;-webkit-text-stroke:0.25px #222222;">2.67</div>
<div style="position:absolute;left:854.99px;top:733px;font-size:14px;line-height:14px;font-weight:400;color:#222222;white-space:nowrap;will-change:transform;-webkit-text-stroke:0.25px #222222;">2.43</div>
<div style="position:absolute;left:860.09px;top:768px;font-size:14px;line-height:14px;font-weight:400;color:#222222;white-space:nowrap;will-change:transform;-webkit-text-stroke:0.25px #222222;">2.89</div>
<div style="position:absolute;left:1013.39px;top:453px;font-size:14px;line-height:14px;font-weight:400;color:#222222;white-space:nowrap;will-change:transform;-webkit-text-stroke:0.25px #222222;">2.87</div>
<div style="position:absolute;left:1023.39px;top:488px;font-size:14px;line-height:14px;font-weight:400;color:#222222;white-space:nowrap;will-change:transform;-webkit-text-stroke:0.25px #222222;">3.01</div>
<div style="position:absolute;left:1032.49px;top:523px;font-size:14px;line-height:14px;font-weight:400;color:#222222;white-space:nowrap;will-change:transform;-webkit-text-stroke:0.25px #222222;">3.36</div>
<div style="position:absolute;left:1018.39px;top:558px;font-size:14px;line-height:14px;font-weight:400;color:#222222;white-space:nowrap;will-change:transform;-webkit-text-stroke:0.25px #222222;">3.11</div>
<div style="position:absolute;left:1014.49px;top:593px;font-size:14px;line-height:14px;font-weight:400;color:#222222;white-space:nowrap;will-change:transform;-webkit-text-stroke:0.25px #222222;">2.96</div>
<div style="position:absolute;left:1014.29px;top:628px;font-size:14px;line-height:14px;font-weight:400;color:#222222;white-space:nowrap;will-change:transform;-webkit-text-stroke:0.25px #222222;">2.92</div>
<div style="position:absolute;left:1021.19px;top:663px;font-size:14px;line-height:14px;font-weight:400;color:#222222;white-space:nowrap;will-change:transform;-webkit-text-stroke:0.25px #222222;">3.18</div>
<div style="position:absolute;left:1008.19px;top:698px;font-size:14px;line-height:14px;font-weight:400;color:#222222;white-space:nowrap;will-change:transform;-webkit-text-stroke:0.25px #222222;">2.52</div>
<div style="position:absolute;left:1018.19px;top:733px;font-size:14px;line-height:14px;font-weight:400;color:#222222;white-space:nowrap;will-change:transform;-webkit-text-stroke:0.25px #222222;">2.52</div>
<div style="position:absolute;left:1011.29px;top:768px;font-size:14px;line-height:14px;font-weight:400;color:#222222;white-space:nowrap;will-change:transform;-webkit-text-stroke:0.25px #222222;">2.64</div>
<div style="position:absolute;left:1167.29px;top:453px;font-size:14px;line-height:14px;font-weight:400;color:#222222;white-space:nowrap;will-change:transform;-webkit-text-stroke:0.25px #222222;">2.98</div>
<div style="position:absolute;left:1185.39px;top:488px;font-size:14px;line-height:14px;font-weight:400;color:#222222;white-space:nowrap;will-change:transform;-webkit-text-stroke:0.25px #222222;">3.58</div>
<div style="position:absolute;left:1185.39px;top:523px;font-size:14px;line-height:14px;font-weight:400;color:#222222;white-space:nowrap;will-change:transform;-webkit-text-stroke:0.25px #222222;">3.7</div>
<div style="position:absolute;left:1174.29px;top:558px;font-size:14px;line-height:14px;font-weight:400;color:#222222;white-space:nowrap;will-change:transform;-webkit-text-stroke:0.25px #222222;">3.25</div>
<div style="position:absolute;left:1168.39px;top:593px;font-size:14px;line-height:14px;font-weight:400;color:#222222;white-space:nowrap;will-change:transform;-webkit-text-stroke:0.25px #222222;">3.13</div>
<div style="position:absolute;left:1175.39px;top:628px;font-size:14px;line-height:14px;font-weight:400;color:#222222;white-space:nowrap;will-change:transform;-webkit-text-stroke:0.25px #222222;">3.43</div>
<div style="position:absolute;left:1172.19px;top:663px;font-size:14px;line-height:14px;font-weight:400;color:#222222;white-space:nowrap;will-change:transform;-webkit-text-stroke:0.25px #222222;">3.21</div>
<div style="position:absolute;left:1172.19px;top:698px;font-size:14px;line-height:14px;font-weight:400;color:#222222;white-space:nowrap;will-change:transform;-webkit-text-stroke:0.25px #222222;">3.17</div>
<div style="position:absolute;left:1171.19px;top:733px;font-size:14px;line-height:14px;font-weight:400;color:#222222;white-space:nowrap;will-change:transform;-webkit-text-stroke:0.25px #222222;">2.5</div>
<div style="position:absolute;left:1176.99px;top:768px;font-size:14px;line-height:14px;font-weight:400;color:#222222;white-space:nowrap;will-change:transform;-webkit-text-stroke:0.25px #222222;">3.5</div>
<div style="position:absolute;left:1312.29px;top:453px;font-size:14px;line-height:14px;font-weight:400;color:#222222;white-space:nowrap;will-change:transform;-webkit-text-stroke:0.25px #222222;">2.87</div>
<div style="position:absolute;left:1328.19px;top:488px;font-size:14px;line-height:14px;font-weight:400;color:#222222;white-space:nowrap;will-change:transform;-webkit-text-stroke:0.25px #222222;">3.26</div>
<div style="position:absolute;left:1344.45px;top:523px;font-size:14px;line-height:14px;font-weight:400;color:#222222;white-space:nowrap;will-change:transform;-webkit-text-stroke:0.25px #222222;">4.19</div>
<div style="position:absolute;left:1321.19px;top:558px;font-size:14px;line-height:14px;font-weight:400;color:#222222;white-space:nowrap;will-change:transform;-webkit-text-stroke:0.25px #222222;">3.27</div>
<div style="position:absolute;left:1316.19px;top:593px;font-size:14px;line-height:14px;font-weight:400;color:#222222;white-space:nowrap;will-change:transform;-webkit-text-stroke:0.25px #222222;">3.08</div>
<div style="position:absolute;left:1322.39px;top:628px;font-size:14px;line-height:14px;font-weight:400;color:#222222;white-space:nowrap;will-change:transform;-webkit-text-stroke:0.25px #222222;">3.32</div>
<div style="position:absolute;left:1320.49px;top:663px;font-size:14px;line-height:14px;font-weight:400;color:#222222;white-space:nowrap;will-change:transform;-webkit-text-stroke:0.25px #222222;">3.18</div>
<div style="position:absolute;left:1312.39px;top:698px;font-size:14px;line-height:14px;font-weight:400;color:#222222;white-space:nowrap;will-change:transform;-webkit-text-stroke:0.25px #222222;">2.81</div>
<div style="position:absolute;left:1315.89px;top:733px;font-size:14px;line-height:14px;font-weight:400;color:#222222;white-space:nowrap;will-change:transform;-webkit-text-stroke:0.25px #222222;">2.7</div>
<div style="position:absolute;left:1314.69px;top:768px;font-size:14px;line-height:14px;font-weight:400;color:#222222;white-space:nowrap;will-change:transform;-webkit-text-stroke:0.25px #222222;">2.91</div></div>
<div style="position:absolute;left:1435px;top:258px;width:1px;height:600px;background:#d9d2c8"></div><div style="position:absolute;left:6px;top:167px;width:810px;height:484px;background:#fffdf8;box-shadow:0px 5px 5px -3px rgba(0,0,0,0.2),0px 8px 10px 1px rgba(0,0,0,0.14),0px 3px 14px 2px rgba(0,0,0,0.12)"></div>
<div style="position:absolute;left:6px;top:175px;width:810px;height:36px;background:#edf1fb;"></div>
<div style="position:absolute;left:22.16px;top:185px;font-size:16px;line-height:16px;font-weight:400;color:#222222;white-space:nowrap;will-change:transform;-webkit-text-stroke:0.25px #222222;transform:scaleX(0.9865);transform-origin:0 0;">Ad Experience by Age and Gender</div>
<div style="position:absolute;left:22.15px;top:221px;font-size:16px;line-height:16px;font-weight:400;color:#222222;white-space:nowrap;will-change:transform;-webkit-text-stroke:0.25px #222222;transform:scaleX(1.0125);transform-origin:0 0;">Ad Influence by Income and Education</div>
<div style="position:absolute;left:22.16px;top:257px;font-size:16px;line-height:16px;font-weight:400;color:#222222;white-space:nowrap;will-change:transform;-webkit-text-stroke:0.25px #222222;transform:scaleX(0.9840);transform-origin:0 0;">Ad Recall and Relevance by Age and Gender</div>
<div style="position:absolute;left:22.16px;top:293px;font-size:16px;line-height:16px;font-weight:400;color:#222222;white-space:nowrap;will-change:transform;-webkit-text-stroke:0.25px #222222;transform:scaleX(0.9966);transform-origin:0 0;">Ad Skip Likelihood by Age and Gender</div>
<div style="position:absolute;left:22.16px;top:329px;font-size:16px;line-height:16px;font-weight:400;color:#222222;white-space:nowrap;will-change:transform;-webkit-text-stroke:0.25px #222222;">Ad-Free Tier Preference by Income and Education</div>
<div style="position:absolute;left:21.54px;top:365px;font-size:16px;line-height:16px;font-weight:400;color:#222222;white-space:nowrap;will-change:transform;-webkit-text-stroke:0.25px #222222;">Content Appeal by Age and Gender</div>
<div style="position:absolute;left:21.54px;top:401px;font-size:16px;line-height:16px;font-weight:400;color:#222222;white-space:nowrap;will-change:transform;-webkit-text-stroke:0.25px #222222;">Current Streaming Services by Age and Gender</div>
<div style="position:absolute;left:21.60px;top:437px;font-size:16px;line-height:16px;font-weight:400;color:#222222;white-space:nowrap;will-change:transform;-webkit-text-stroke:0.25px #222222;transform:scaleX(0.9838);transform-origin:0 0;">Overall Experience Rank by Age and Gender</div>
<div style="position:absolute;left:22.12px;top:473px;font-size:16px;line-height:16px;font-weight:400;color:#222222;white-space:nowrap;will-change:transform;-webkit-text-stroke:0.25px #222222;transform:scaleX(1.0058);transform-origin:0 0;">Viewing Methods by Age and Gender</div>
<div style="position:absolute;left:22.16px;top:509px;font-size:16px;line-height:16px;font-weight:400;color:#222222;white-space:nowrap;will-change:transform;-webkit-text-stroke:0.25px #222222;transform:scaleX(0.9884);transform-origin:0 0;">Ad Break Opinion by Age and Gender</div>
<div style="position:absolute;left:22.03px;top:545px;font-size:16px;line-height:16px;font-weight:400;color:#222222;white-space:nowrap;will-change:transform;-webkit-text-stroke:0.25px #222222;">TV type</div>
<div style="position:absolute;left:22.02px;top:581px;font-size:16px;line-height:16px;font-weight:400;color:#222222;white-space:nowrap;will-change:transform;-webkit-text-stroke:0.25px #222222;transform:scaleX(1.0279);transform-origin:0 0;">TV type vs platform</div>
<div style="position:absolute;left:21.54px;top:617px;font-size:16px;line-height:16px;font-weight:400;color:#222222;white-space:nowrap;will-change:transform;-webkit-text-stroke:0.25px #222222;">Cat Outreach</div>
</body></html>
